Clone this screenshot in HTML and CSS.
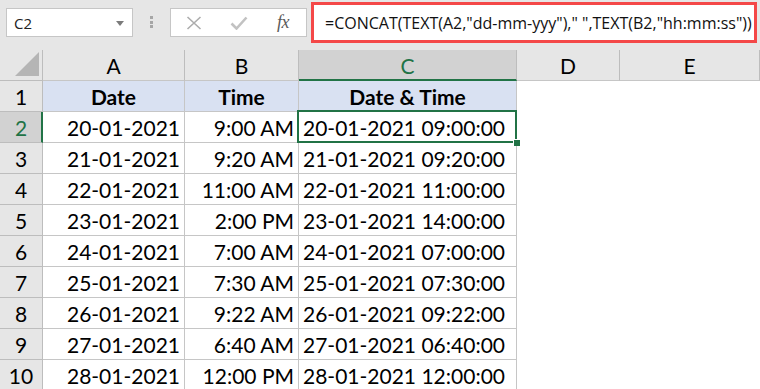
FILE: index.html
```html
<!DOCTYPE html>
<html>
<head>
<meta charset="utf-8">
<link rel="stylesheet" href="styles.css">
</head>
<body>
<div class="toolbar">
  <div class="namebox">
    <span class="nb-text">C2</span>
    <svg class="nb-arrow" width="8" height="5" viewBox="0 0 8 5"><path d="M0 0 H8 L4 5 Z" fill="#7b7b7b"/></svg>
  </div>
  <div class="grip"><i></i><i></i><i></i></div>
  <div class="fxbox">
    <svg class="ic-x" width="16" height="14" viewBox="0 0 16 14"><path d="M1.5 1 L14.5 13 M14.5 1 L1.5 13" stroke="#adadad" stroke-width="1.6" fill="none"/></svg>
    <svg class="ic-ok" width="18" height="14" viewBox="0 0 18 14"><path d="M1.5 7.5 L6.5 12.5 L16.5 1.5" stroke="#c2c2c2" stroke-width="2.6" fill="none"/></svg>
    <span class="fx">fx</span>
  </div>
  <div class="formula">=CONCAT(TEXT(A2,"dd-mm-yyy")," ",TEXT(B2,"hh:mm:ss"))</div>
</div>
<div class="sheet">
  <div class="corner"><svg width="24" height="24" viewBox="0 0 24 24"><path d="M24 0 V24 H0 Z" fill="#b5b5b5"/></svg></div>
  <div class="ch">A</div>
  <div class="ch">B</div>
  <div class="ch sel">C</div>
  <div class="ch">D</div>
  <div class="ch">E</div>

  <div class="rh">1</div>
  <div class="th">Date</div>
  <div class="th">Time</div>
  <div class="th">Date &amp; Time</div>
  <div class="e"></div><div class="e"></div>

  <div class="rh sel">2</div>
  <div class="td r">20-01-2021</div>
  <div class="td r">9:00 AM</div>
  <div class="td l cur">20-01-2021 09:00:00<span class="selbox"><span class="handle"></span></span></div>
  <div class="e"></div><div class="e"></div>

  <div class="rh">3</div>
  <div class="td r">21-01-2021</div>
  <div class="td r">9:20 AM</div>
  <div class="td l">21-01-2021 09:20:00</div>
  <div class="e"></div><div class="e"></div>

  <div class="rh">4</div>
  <div class="td r">22-01-2021</div>
  <div class="td r">11:00 AM</div>
  <div class="td l">22-01-2021 11:00:00</div>
  <div class="e"></div><div class="e"></div>

  <div class="rh">5</div>
  <div class="td r">23-01-2021</div>
  <div class="td r">2:00 PM</div>
  <div class="td l">23-01-2021 14:00:00</div>
  <div class="e"></div><div class="e"></div>

  <div class="rh">6</div>
  <div class="td r">24-01-2021</div>
  <div class="td r">7:00 AM</div>
  <div class="td l">24-01-2021 07:00:00</div>
  <div class="e"></div><div class="e"></div>

  <div class="rh">7</div>
  <div class="td r">25-01-2021</div>
  <div class="td r">7:30 AM</div>
  <div class="td l">25-01-2021 07:30:00</div>
  <div class="e"></div><div class="e"></div>

  <div class="rh">8</div>
  <div class="td r">26-01-2021</div>
  <div class="td r">9:22 AM</div>
  <div class="td l">26-01-2021 09:22:00</div>
  <div class="e"></div><div class="e"></div>

  <div class="rh">9</div>
  <div class="td r">27-01-2021</div>
  <div class="td r">6:40 AM</div>
  <div class="td l">27-01-2021 06:40:00</div>
  <div class="e"></div><div class="e"></div>

  <div class="rh">10</div>
  <div class="td r">28-01-2021</div>
  <div class="td r">12:00 PM</div>
  <div class="td l">28-01-2021 12:00:00</div>
  <div class="e"></div><div class="e"></div>
</div>
</body>
</html>
```

FILE: styles.css
```css
* { box-sizing: border-box; }
html, body { margin: 0; padding: 0; background: #fff; overflow: hidden; }
body { width: 760px; height: 389px; font-family: "Lato", "Liberation Sans", sans-serif; }

.toolbar {
  height: 50px;
  background: #e6e6e6;
  display: flex;
  align-items: flex-start;
}
.namebox {
  margin: 8px 0 0 6px;
  width: 127px;
  height: 29px;
  background: #fff;
  border: 1px solid #c6c6c6;
  display: flex;
  align-items: center;
  justify-content: space-between;
  padding: 0 8px 0 7px;
}
.nb-text { font-family: "Open Sans", sans-serif; font-size: 15px; color: #222; }
.nb-arrow { margin-top: 1px; }
.grip {
  margin: 16px 0 0 17px;
  width: 3px;
  display: flex;
  flex-direction: column;
  gap: 1.5px;
}
.grip i { display: block; width: 3px; height: 3px; background: #a6a6a6; }
.fxbox {
  margin: 8px 0 0 17px;
  width: 137px;
  height: 29px;
  background: #fff;
  border: 1px solid #c6c6c6;
  display: flex;
  align-items: center;
  padding-left: 15px;
}
.ic-x { margin-left: 0; }
.ic-ok { margin-left: 28px; }
.fx {
  margin-left: 29px;
  font-family: "Liberation Serif", serif;
  font-style: italic;
  font-size: 18px;
  color: #5a5a5a;
  letter-spacing: -0.5px;
}
.formula {
  margin: 2px 0 0 4px;
  width: 446px;
  height: 41px;
  background: #fff;
  border: 3px solid #f44848;
  padding-left: 11px;
  display: flex;
  align-items: center;
  font-family: "Open Sans", sans-serif;
  font-size: 16px;
  color: #111;
  white-space: nowrap;
}

.sheet {
  display: grid;
  grid-template-columns: 43px 142px 114px 218px 103px 1fr;
  grid-auto-rows: 31px;
}
.sheet > div {
  display: flex;
  align-items: center;
  font-size: 21px;
  color: #000;
  white-space: nowrap;
}
.corner {
  background: #e6e6e6;
  border-right: 1px solid #bdbdbd;
  border-bottom: 1px solid #bdbdbd;
  justify-content: flex-end;
  align-items: flex-end !important;
  padding: 0 3px 4px 0;
}
.ch {
  background: #e6e6e6;
  border-right: 1px solid #bdbdbd;
  border-bottom: 1px solid #c6c6c6;
  justify-content: center;
  padding-top: 1px;
}
.ch.sel {
  background: #d2d2d2;
  color: #217346 !important;
  border-bottom: 2px solid #217346;
  padding-top: 2px;
}
.rh {
  background: #e6e6e6;
  border-right: 1px solid #bdbdbd;
  border-bottom: 1px solid #bdbdbd;
  justify-content: center;
}
.rh.sel {
  background: #d2d2d2;
  color: #217346 !important;
  border-right: 2px solid #217346;
  padding-left: 1px;
}
.th {
  background: #d9e1f2;
  border-right: 1px solid #c6c6c6;
  border-bottom: 1px solid #c6c6c6;
  justify-content: center;
  font-weight: bold;
}
.td {
  background: #fff;
  border-right: 1px solid #c6c6c6;
  border-bottom: 1px solid #c6c6c6;
}
.td.r { justify-content: flex-end; padding-right: 4px; }
.td.l { justify-content: flex-start; padding-left: 4px; }
.e { background: #fff; }
.cur { position: relative; }
.selbox {
  position: absolute;
  left: -2px;
  top: -2px;
  right: -1px;
  bottom: -1px;
  border: 2px solid #217346;
  z-index: 2;
}
.handle {
  position: absolute;
  right: -5px;
  bottom: -5px;
  width: 7px;
  height: 7px;
  background: #217346;
  border-left: 1px solid #fff;
  border-top: 1px solid #fff;
}
```
